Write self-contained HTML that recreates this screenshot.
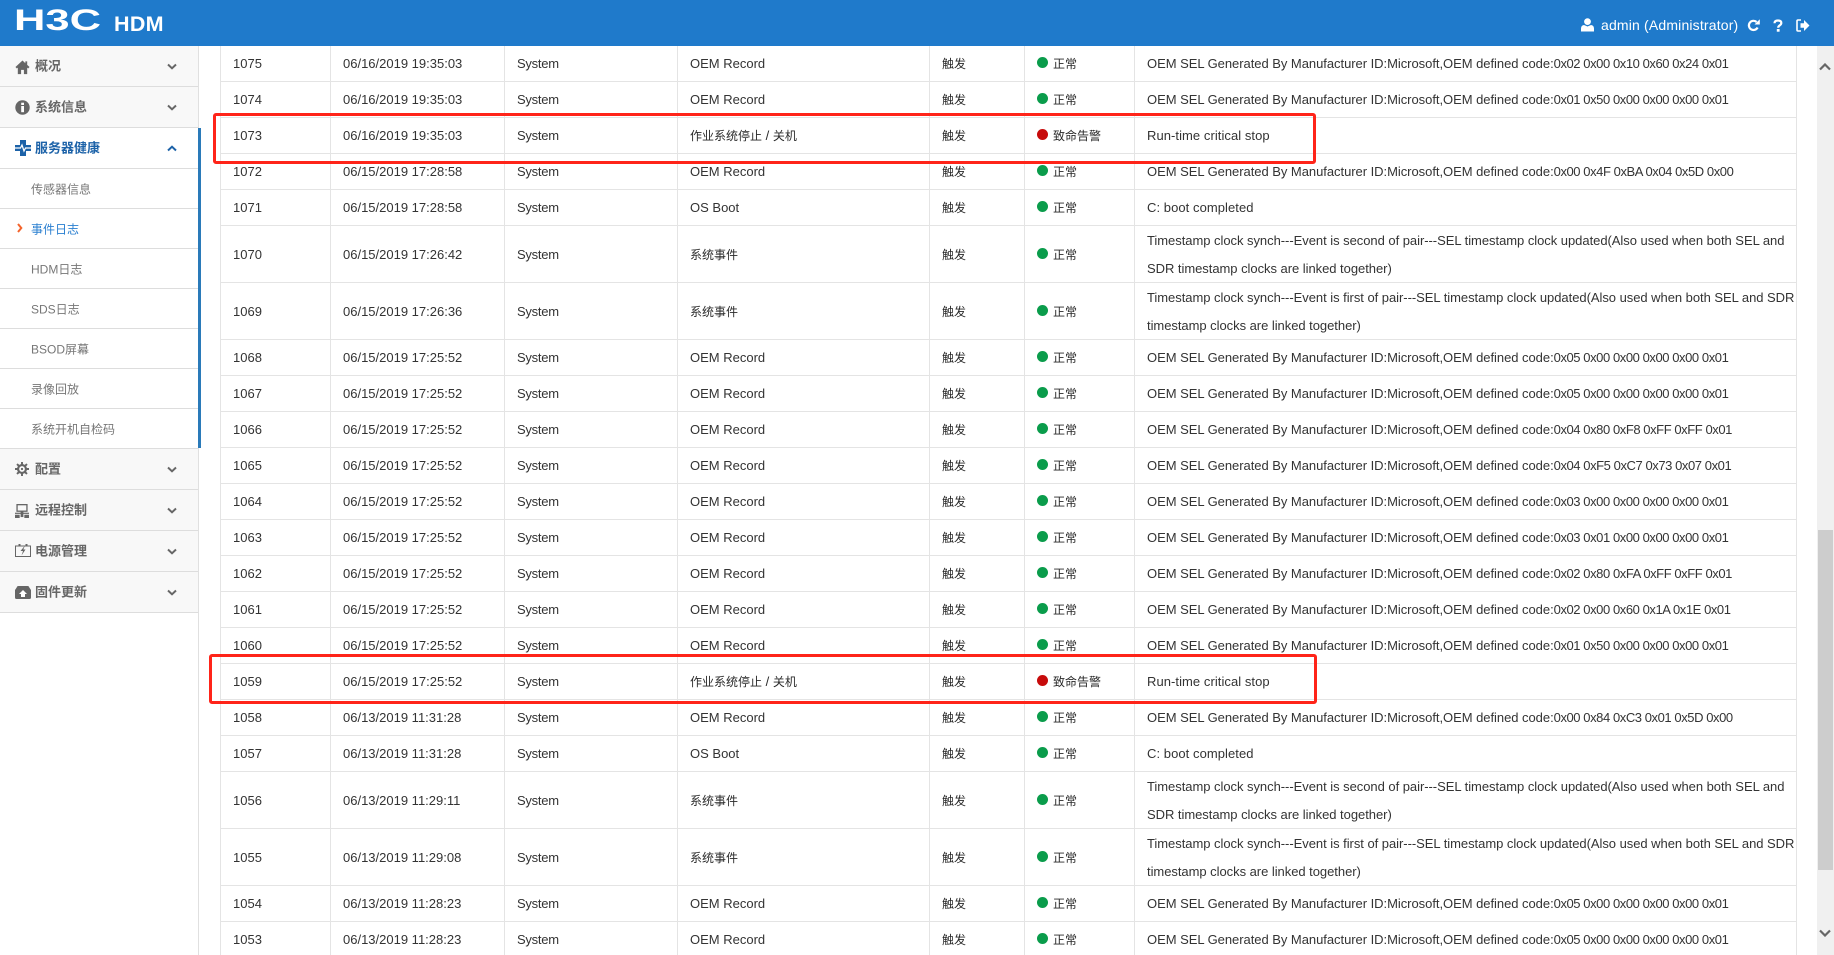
<!DOCTYPE html>
<html lang="zh-CN"><head><meta charset="utf-8"><title>H3C HDM</title>
<style>
html,body{margin:0;padding:0;width:1834px;height:955px;overflow:hidden;background:#fff}
body{position:relative;font-family:"Liberation Sans","Noto Sans CJK SC",sans-serif;color:#333;font-size:13px}
.abs{position:absolute}
#hd{position:absolute;left:0;top:0;width:1834px;height:46px;background:#1f7acb}
#side{position:absolute;left:0;top:46px;width:198px;height:909px;border-right:1px solid #e0e0e0;background:#fff}
.m{position:absolute;left:0;width:198px;background:#f8f8f8;border-bottom:1px solid #ddd;box-sizing:border-box;color:#666;font-weight:bold;font-size:13px}
.m span{position:absolute;left:35px;top:calc(50% - 1px);transform:translateY(-50%);white-space:nowrap}
.m svg.i{position:absolute;left:15px;top:12px}
.m svg.c{position:absolute;left:167px;top:17px}
.a{background:#fff;color:#1c62a8}
.s{position:absolute;left:0;width:198px;height:40px;border-bottom:1px solid #ddd;box-sizing:border-box;background:#fff;color:#777;font-size:12px}
.s span{position:absolute;left:31px;top:50%;transform:translateY(-50%);white-space:nowrap}
table{position:absolute;left:220px;top:46px;border-collapse:separate;border-spacing:0;table-layout:fixed;width:1577px}
td{border-right:1px solid #e4e4e4;border-bottom:1px solid #e4e4e4;padding:0 0 0 12px;box-sizing:border-box;height:36px;line-height:28px;white-space:nowrap;overflow:hidden;font-size:13px;color:#333;vertical-align:middle}
td:first-child{border-left:1px solid #e4e4e4}
tr.d td{height:57px;padding-top:2px}
tr.d td:last-child{padding-top:1px;line-height:27.5px}
td:last-child{padding-right:0;padding-left:12px;letter-spacing:-.04px}
td:last-child.p{letter-spacing:.06px}
td:nth-child(3){letter-spacing:-.25px}
.h{letter-spacing:-.43px}
b.z{font-weight:normal;font-size:12px;color:#2a2a2a}
b.z u{text-decoration:none;font-size:13px}
i.g,i.r{display:inline-block;width:11px;height:11px;border-radius:50%;background:#0a9c4b;vertical-align:0;margin-right:5px}
i.r{background:#c70b0b}
.rb{position:absolute;border:3px solid #ff2419;border-radius:3px;box-sizing:border-box}
</style></head><body>
<div id="hd">
<svg class="abs" style="left:14px;top:7px" width="90" height="26" viewBox="0 0 90 26"><text x="0" y="23" textLength="87" lengthAdjust="spacingAndGlyphs" font-family="Liberation Sans" font-weight="bold" font-size="30" fill="#fff">H3C</text></svg>
<div class="abs" style="left:114px;top:12px;font-size:21.5px;line-height:24px;font-weight:bold;color:#fff;letter-spacing:.3px">HDM</div>
<svg class="abs" style="left:1581px;top:18px" width="13" height="14" viewBox="0 0 13 14"><circle cx="6.5" cy="3.6" r="3.4" fill="#fff"/><path d="M0 13.5V10.5Q0 7.5 3 7L6.500 8.500 10 7Q13 7.500 13 10.500V13.500Z" fill="#fff"/></svg>
<div class="abs" style="left:1601px;top:15px;font-size:14px;line-height:20px;color:#fff;white-space:nowrap;letter-spacing:.17px">admin (Administrator)</div>
<svg class="abs" style="left:1747px;top:19px" width="13" height="13" viewBox="0 0 13 13"><path d="M10.600 8.500A4.600 4.600 0 1 1 9.600 3" fill="none" stroke="#fff" stroke-width="2.200"/><path d="M7.500 5.500H12.800V0.300Z" fill="#fff"/></svg>
<svg class="abs" style="left:1773px;top:19px" width="10" height="13" viewBox="0 0 10 13"><path d="M1.500 4.300Q1.500 1.500 5 1.500 8.300 1.500 8.300 4 8.300 5.300 6.800 6.300 5.200 7.300 5.200 8.800" fill="none" stroke="#fff" stroke-width="2.200"/><rect x="3.800" y="10" width="2.800" height="2.700" fill="#fff"/></svg>
<svg class="abs" style="left:1796px;top:19px" width="14" height="13" viewBox="0 0 14 13"><path d="M5 1H2Q1 1 1 2V11Q1 12 2 12H5" fill="none" stroke="#fff" stroke-width="1.600"/><path d="M4.500 4.200H8V1L13.500 6.500 8 12V8.800H4.500Z" fill="#fff"/></svg>
</div>

<div id="side">
<div class="abs" style="left:20px;top:122px;height:280px;border-left:1px dotted #e4e4e4"></div>
</div>
<div class="abs" style="left:198px;top:128px;width:2.500px;height:320px;background:#2a7ab9"></div>
<svg class="abs" style="left:191px;top:214px" width="8" height="26" viewBox="0 0 8 26"><path d="M8 0L0 13 8 26Z" fill="#2a7ab9"/></svg>

<div class="m" style="top:46px;height:41px"><svg class="i" width="15" height="15" viewBox="0 0 16 16" style="top:14px"><path d="M8 0.500L0.500 7.500 2 9 3 8.100V15H6.500V10.500H9.500V15H13V8.100L14 9 15.500 7.500 13 5.200V1.500H11V3.400Z" fill="#666"/></svg><span>概况</span><svg class="c" width="10" height="7" viewBox="0 0 10 7"><path d="M1 1.500L5 5.300 9 1.500" fill="none" stroke="#666" stroke-width="2"/></svg></div>
<div class="m" style="top:87px;height:41px"><svg class="i" width="15" height="15" viewBox="0 0 15 15" style="left:15px;top:13px"><circle cx="7.500" cy="7.500" r="7.200" fill="#666"/><rect x="6.200" y="6" width="2.800" height="6.200" fill="#fff"/><rect x="6.200" y="2.700" width="2.800" height="2.300" fill="#fff"/></svg><span>系统信息</span><svg class="c" width="10" height="7" viewBox="0 0 10 7"><path d="M1 1.500L5 5.300 9 1.500" fill="none" stroke="#666" stroke-width="2"/></svg></div>
<div class="m a" style="top:128px;height:41px"><svg class="i" width="16" height="16" viewBox="0 0 16 16" style="top:12px"><path d="M5 0H11V5H16V11H11V16H5V11H0V5H5Z" fill="#1c62a8"/><path d="M0 8H5.500L7 5 9 11 10.500 8H16" fill="none" stroke="#fff" stroke-width="1.200"/></svg><span>服务器健康</span><svg class="c" width="10" height="7" viewBox="0 0 10 7"><path d="M1 5.500L5 1.700 9 5.500" fill="none" stroke="#1c62a8" stroke-width="2"/></svg></div>

<div class="s" style="top:169px"><span>传感器信息</span></div>
<div class="s" style="top:209px;color:#2a7fd0"><svg class="abs" style="left:17px;top:14px" width="6" height="10" viewBox="0 0 6 10"><path d="M1 1L4.300 5 1 9" fill="none" stroke="#f4642c" stroke-width="2"/></svg><span>事件日志</span></div>
<div class="s" style="top:249px"><span>HDM日志</span></div>
<div class="s" style="top:289px"><span>SDS日志</span></div>
<div class="s" style="top:329px"><span>BSOD屏幕</span></div>
<div class="s" style="top:369px"><span>录像回放</span></div>
<div class="s" style="top:409px"><span>系统开机自检码</span></div>

<div class="m" style="top:449px;height:41px"><svg class="i" width="14" height="14" viewBox="0 0 16 16" style="top:13px"><circle cx="8" cy="8" r="4.500" fill="none" stroke="#666" stroke-width="2.500"/><circle cx="8" cy="8" r="1.300" fill="#666"/><path d="M8 0V3M8 13V16M0 8H3M13 8H16M2.300 2.300L4.500 4.500M11.500 11.500L13.700 13.700M13.700 2.300L11.500 4.500M4.500 11.500L2.300 13.700" stroke="#666" stroke-width="2.200"/></svg><span>配置</span><svg class="c" width="10" height="7" viewBox="0 0 10 7"><path d="M1 1.500L5 5.300 9 1.500" fill="none" stroke="#666" stroke-width="2"/></svg></div>
<div class="m" style="top:490px;height:41px"><svg class="i" width="14" height="14" viewBox="0 0 15 15" style="top:14px"><rect x="2.200" y="0.700" width="10.600" height="7" fill="none" stroke="#666" stroke-width="1.400"/><rect x="0" y="9.300" width="15" height="1.300" fill="#666"/><rect x="0" y="11.500" width="5" height="3.500" fill="#666"/><rect x="10" y="11.500" width="5" height="3.500" fill="#666"/><rect x="6" y="8" width="3" height="6" fill="#666"/></svg><span>远程控制</span><svg class="c" width="10" height="7" viewBox="0 0 10 7"><path d="M1 1.500L5 5.300 9 1.500" fill="none" stroke="#666" stroke-width="2"/></svg></div>
<div class="m" style="top:531px;height:41px"><svg class="i" width="16" height="13" viewBox="0 0 16 13" style="top:13px"><path d="M0.500 2H4V0.500H5V2H11V0.500H12V2H15.500V12.500H0.500Z" fill="none" stroke="#666"/><path d="M10 1.500L5.500 7H8L6.500 11.500 10.500 5.500H8.300Z" fill="#666"/></svg><span>电源管理</span><svg class="c" width="10" height="7" viewBox="0 0 10 7"><path d="M1 1.500L5 5.300 9 1.500" fill="none" stroke="#666" stroke-width="2"/></svg></div>
<div class="m" style="top:572px;height:41px"><svg class="i" width="16" height="13" viewBox="0 0 16 13" style="top:14px"><path d="M3.500 0H12.500Q14 0 14.300 1.500L16 4V11.500Q16 13 14.500 13H1.500Q0 13 0 11.500V4L1.700 1.500Q2 0 3.500 0Z" fill="#666"/><path d="M8 4L12 8H10V11H6V8H4Z" fill="#fff"/></svg><span>固件更新</span><svg class="c" width="10" height="7" viewBox="0 0 10 7"><path d="M1 1.500L5 5.300 9 1.500" fill="none" stroke="#666" stroke-width="2"/></svg></div>

<table>
<colgroup><col style="width:111px"><col style="width:174px"><col style="width:173px"><col style="width:252px"><col style="width:95px"><col style="width:110px"><col style="width:662px"></colgroup>
<tr><td>1075</td><td>06/16/2019 19:35:03</td><td>System</td><td>OEM Record</td><td><b class="z">触发</b></td><td><i class="g"></i><b class="z">正常</b></td><td>OEM SEL Generated By Manufacturer ID:Microsoft,OEM defined code:<span class="h">0x02 0x00 0x10 0x60 0x24 0x01</span></td></tr>
<tr><td>1074</td><td>06/16/2019 19:35:03</td><td>System</td><td>OEM Record</td><td><b class="z">触发</b></td><td><i class="g"></i><b class="z">正常</b></td><td>OEM SEL Generated By Manufacturer ID:Microsoft,OEM defined code:<span class="h">0x01 0x50 0x00 0x00 0x00 0x01</span></td></tr>
<tr><td>1073</td><td>06/16/2019 19:35:03</td><td>System</td><td><b class="z">作业系统停止<u> / </u>关机</b></td><td><b class="z">触发</b></td><td><i class="r"></i><b class="z">致命告警</b></td><td class="p">Run-time critical stop</td></tr>
<tr><td>1072</td><td>06/15/2019 17:28:58</td><td>System</td><td>OEM Record</td><td><b class="z">触发</b></td><td><i class="g"></i><b class="z">正常</b></td><td>OEM SEL Generated By Manufacturer ID:Microsoft,OEM defined code:<span class="h">0x00 0x4F 0xBA 0x04 0x5D 0x00</span></td></tr>
<tr><td>1071</td><td>06/15/2019 17:28:58</td><td>System</td><td>OS Boot</td><td><b class="z">触发</b></td><td><i class="g"></i><b class="z">正常</b></td><td class="p">C: boot completed</td></tr>
<tr class="d"><td>1070</td><td>06/15/2019 17:26:42</td><td>System</td><td><b class="z">系统事件</b></td><td><b class="z">触发</b></td><td><i class="g"></i><b class="z">正常</b></td><td>Timestamp clock synch---Event is second of pair---SEL timestamp clock updated(Also used when both SEL and<br>SDR timestamp clocks are linked together)</td></tr>
<tr class="d"><td>1069</td><td>06/15/2019 17:26:36</td><td>System</td><td><b class="z">系统事件</b></td><td><b class="z">触发</b></td><td><i class="g"></i><b class="z">正常</b></td><td>Timestamp clock synch---Event is first of pair---SEL timestamp clock updated(Also used when both SEL and SDR<br>timestamp clocks are linked together)</td></tr>
<tr><td>1068</td><td>06/15/2019 17:25:52</td><td>System</td><td>OEM Record</td><td><b class="z">触发</b></td><td><i class="g"></i><b class="z">正常</b></td><td>OEM SEL Generated By Manufacturer ID:Microsoft,OEM defined code:<span class="h">0x05 0x00 0x00 0x00 0x00 0x01</span></td></tr>
<tr><td>1067</td><td>06/15/2019 17:25:52</td><td>System</td><td>OEM Record</td><td><b class="z">触发</b></td><td><i class="g"></i><b class="z">正常</b></td><td>OEM SEL Generated By Manufacturer ID:Microsoft,OEM defined code:<span class="h">0x05 0x00 0x00 0x00 0x00 0x01</span></td></tr>
<tr><td>1066</td><td>06/15/2019 17:25:52</td><td>System</td><td>OEM Record</td><td><b class="z">触发</b></td><td><i class="g"></i><b class="z">正常</b></td><td>OEM SEL Generated By Manufacturer ID:Microsoft,OEM defined code:<span class="h">0x04 0x80 0xF8 0xFF 0xFF 0x01</span></td></tr>
<tr><td>1065</td><td>06/15/2019 17:25:52</td><td>System</td><td>OEM Record</td><td><b class="z">触发</b></td><td><i class="g"></i><b class="z">正常</b></td><td>OEM SEL Generated By Manufacturer ID:Microsoft,OEM defined code:<span class="h">0x04 0xF5 0xC7 0x73 0x07 0x01</span></td></tr>
<tr><td>1064</td><td>06/15/2019 17:25:52</td><td>System</td><td>OEM Record</td><td><b class="z">触发</b></td><td><i class="g"></i><b class="z">正常</b></td><td>OEM SEL Generated By Manufacturer ID:Microsoft,OEM defined code:<span class="h">0x03 0x00 0x00 0x00 0x00 0x01</span></td></tr>
<tr><td>1063</td><td>06/15/2019 17:25:52</td><td>System</td><td>OEM Record</td><td><b class="z">触发</b></td><td><i class="g"></i><b class="z">正常</b></td><td>OEM SEL Generated By Manufacturer ID:Microsoft,OEM defined code:<span class="h">0x03 0x01 0x00 0x00 0x00 0x01</span></td></tr>
<tr><td>1062</td><td>06/15/2019 17:25:52</td><td>System</td><td>OEM Record</td><td><b class="z">触发</b></td><td><i class="g"></i><b class="z">正常</b></td><td>OEM SEL Generated By Manufacturer ID:Microsoft,OEM defined code:<span class="h">0x02 0x80 0xFA 0xFF 0xFF 0x01</span></td></tr>
<tr><td>1061</td><td>06/15/2019 17:25:52</td><td>System</td><td>OEM Record</td><td><b class="z">触发</b></td><td><i class="g"></i><b class="z">正常</b></td><td>OEM SEL Generated By Manufacturer ID:Microsoft,OEM defined code:<span class="h">0x02 0x00 0x60 0x1A 0x1E 0x01</span></td></tr>
<tr><td>1060</td><td>06/15/2019 17:25:52</td><td>System</td><td>OEM Record</td><td><b class="z">触发</b></td><td><i class="g"></i><b class="z">正常</b></td><td>OEM SEL Generated By Manufacturer ID:Microsoft,OEM defined code:<span class="h">0x01 0x50 0x00 0x00 0x00 0x01</span></td></tr>
<tr><td>1059</td><td>06/15/2019 17:25:52</td><td>System</td><td><b class="z">作业系统停止<u> / </u>关机</b></td><td><b class="z">触发</b></td><td><i class="r"></i><b class="z">致命告警</b></td><td class="p">Run-time critical stop</td></tr>
<tr><td>1058</td><td>06/13/2019 11:31:28</td><td>System</td><td>OEM Record</td><td><b class="z">触发</b></td><td><i class="g"></i><b class="z">正常</b></td><td>OEM SEL Generated By Manufacturer ID:Microsoft,OEM defined code:<span class="h">0x00 0x84 0xC3 0x01 0x5D 0x00</span></td></tr>
<tr><td>1057</td><td>06/13/2019 11:31:28</td><td>System</td><td>OS Boot</td><td><b class="z">触发</b></td><td><i class="g"></i><b class="z">正常</b></td><td class="p">C: boot completed</td></tr>
<tr class="d"><td>1056</td><td>06/13/2019 11:29:11</td><td>System</td><td><b class="z">系统事件</b></td><td><b class="z">触发</b></td><td><i class="g"></i><b class="z">正常</b></td><td>Timestamp clock synch---Event is second of pair---SEL timestamp clock updated(Also used when both SEL and<br>SDR timestamp clocks are linked together)</td></tr>
<tr class="d"><td>1055</td><td>06/13/2019 11:29:08</td><td>System</td><td><b class="z">系统事件</b></td><td><b class="z">触发</b></td><td><i class="g"></i><b class="z">正常</b></td><td>Timestamp clock synch---Event is first of pair---SEL timestamp clock updated(Also used when both SEL and SDR<br>timestamp clocks are linked together)</td></tr>
<tr><td>1054</td><td>06/13/2019 11:28:23</td><td>System</td><td>OEM Record</td><td><b class="z">触发</b></td><td><i class="g"></i><b class="z">正常</b></td><td>OEM SEL Generated By Manufacturer ID:Microsoft,OEM defined code:<span class="h">0x05 0x00 0x00 0x00 0x00 0x01</span></td></tr>
<tr><td>1053</td><td>06/13/2019 11:28:23</td><td>System</td><td>OEM Record</td><td><b class="z">触发</b></td><td><i class="g"></i><b class="z">正常</b></td><td>OEM SEL Generated By Manufacturer ID:Microsoft,OEM defined code:<span class="h">0x05 0x00 0x00 0x00 0x00 0x01</span></td></tr>
</table>

<div class="rb" style="left:213px;top:113px;width:1103px;height:51px"></div>
<div class="rb" style="left:209px;top:654px;width:1108px;height:50px"></div>

<div class="abs" style="left:1817px;top:46px;width:17px;height:909px;background:#f0f0f0"></div>
<div class="abs" style="left:1818px;top:530px;width:15px;height:340px;background:#cdcdcd"></div>
<svg class="abs" style="left:1819px;top:63px" width="12" height="8" viewBox="0 0 12 8"><path d="M1 6.500L6 1.500 11 6.500" fill="none" stroke="#666" stroke-width="2.200"/></svg>
<svg class="abs" style="left:1819px;top:929px" width="12" height="8" viewBox="0 0 12 8"><path d="M1 1.500L6 6.500 11 1.500" fill="none" stroke="#666" stroke-width="2.200"/></svg>
</body></html>
